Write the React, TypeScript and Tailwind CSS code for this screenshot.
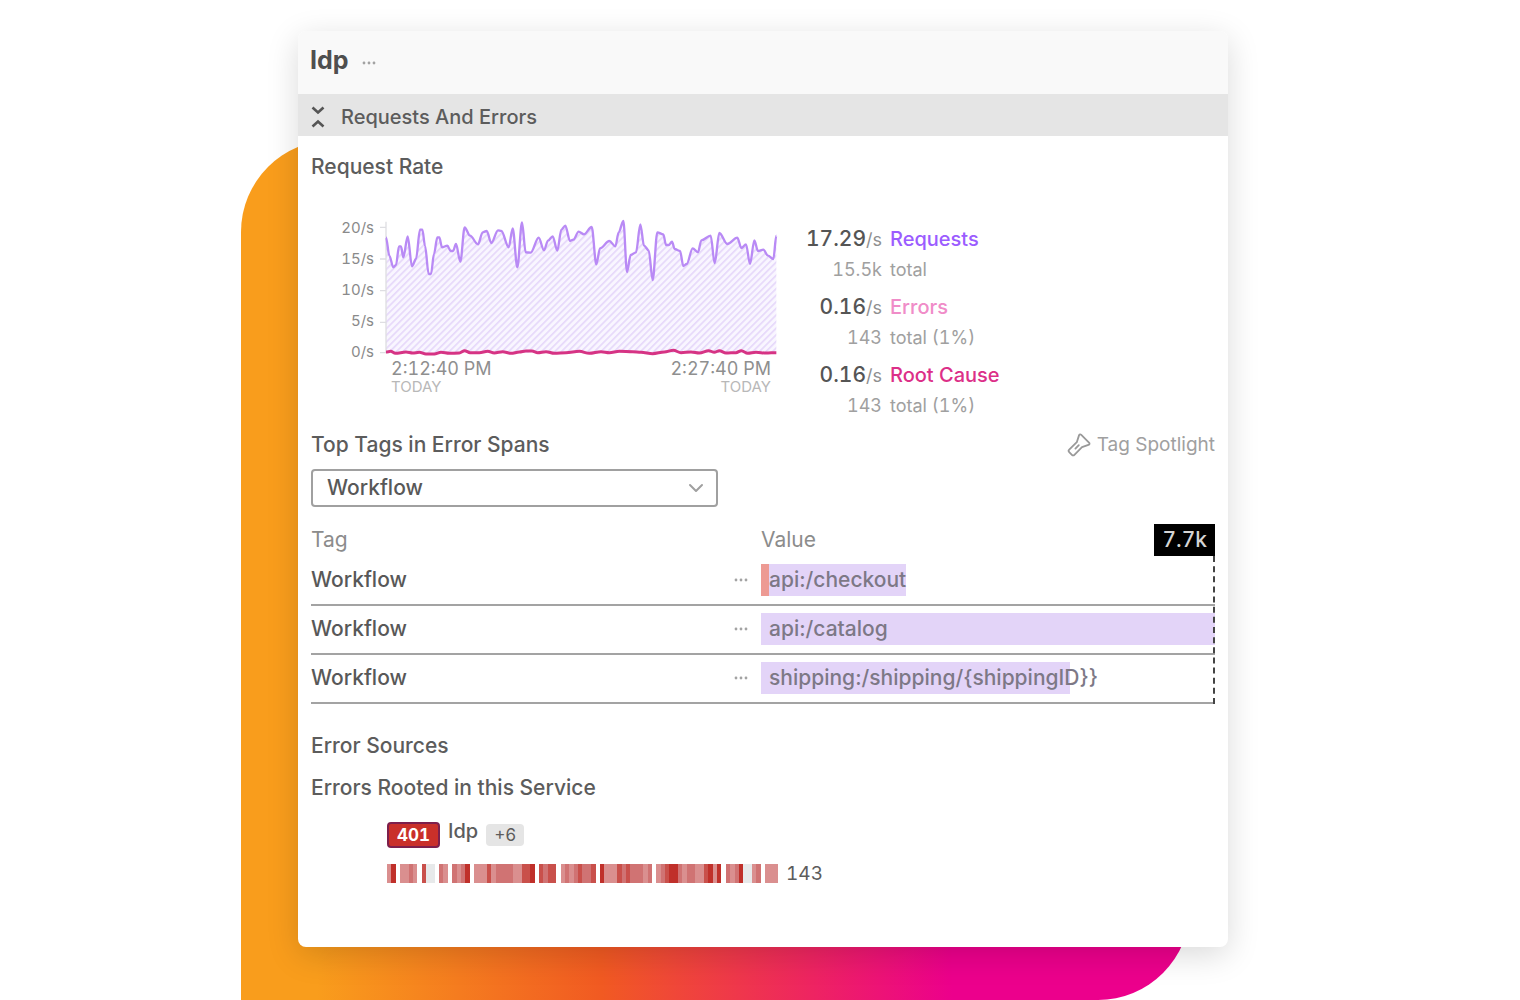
import { ChevronDown } from 'lucide-react';
import { useState } from 'react';

const stats = [
  { rate: '17.29', label: 'Requests', count: '15.5k', note: 'total', color: 'text-[#9b5cff]' },
  { rate: '0.16', label: 'Errors', count: '143', note: 'total (1%)', color: 'text-[#f08cc8]' },
  { rate: '0.16', label: 'Root Cause', count: '143', note: 'total (1%)', color: 'text-[#dc2f88]' },
];

const tagRows = [
  { value: 'api:/checkout', width: 32, error: true },
  { value: 'api:/catalog', width: 100, error: false },
  { value: 'shipping:/shipping/{shippingID}}', width: 68, error: false },
];

const axisLabels = ['20/s', '15/s', '10/s', '5/s', '0/s'];

// x, y in plot units: three per pixel, zero requests at y = 431
const requestPoints: [number, number][] = [
  [0, 85], [10, 140], [22, 175], [30, 168], [39, 112], [45, 112], [52, 145], [65, 82], [78, 172], [90, 150],
  [102, 62], [109, 62], [117, 110], [128, 195], [135, 195], [144, 135], [154, 85], [160, 85], [168, 115], [184, 110],
  [194, 126], [201, 126], [210, 105], [223, 158], [236, 55], [252, 80], [276, 106], [290, 70], [302, 66], [316, 102],
  [336, 64], [346, 66], [368, 115], [380, 58], [394, 175], [408, 40], [419, 130], [434, 131], [458, 86], [474, 124],
  [486, 95], [500, 82], [514, 125], [526, 62], [538, 50], [552, 96], [562, 92], [578, 68], [594, 76], [617, 54],
  [631, 166], [642, 118], [670, 96], [688, 112], [698, 70], [712, 36], [723, 189], [734, 138], [750, 130], [763, 46],
  [774, 110], [788, 124], [800, 213], [814, 70], [832, 76], [840, 108], [848, 108], [858, 98], [866, 120], [882, 126],
  [892, 171], [902, 165], [920, 118], [936, 130], [946, 94], [974, 80], [986, 163], [1000, 72], [1024, 105], [1054, 86],
  [1066, 117], [1080, 106], [1092, 165], [1105, 94], [1116, 126], [1132, 122], [1146, 140], [1162, 150], [1171, 80],
];

const errorPoints: [number, number][] = [
  [0, 429], [14, 427], [28, 433], [60, 429], [80, 432], [100, 430], [120, 435], [145, 435], [165, 430], [190, 433],
  [220, 432], [236, 425], [252, 431], [280, 431], [305, 427], [325, 432], [350, 428], [375, 433], [400, 429], [420, 426],
  [438, 426], [455, 431], [480, 428], [505, 433], [540, 431], [580, 427], [610, 433], [645, 428], [670, 431], [700, 427],
  [740, 428], [765, 430], [800, 434], [835, 429], [862, 424], [885, 431], [915, 429], [940, 432], [968, 425], [985, 430],
  [1000, 425], [1020, 432], [1050, 431], [1066, 425], [1085, 433], [1110, 430], [1140, 432], [1171, 431],
];

// one cell per ten seconds: "." is a gap, "g" is idle, 1-4 grow with the error count
const heatCells =
  '14.1121.3gg.21.2124.111312222113' + '34.3233.12123223.4111323222' + '12.123442122113414.2124gg12.111';

const heatColors: Record<string, string> = {
  '.': 'bg-white',
  g: 'bg-[#e7e9ea]',
  '1': 'bg-[#da8f8f]',
  '2': 'bg-[#d07373]',
  '3': 'bg-[#c9504b]',
  '4': 'bg-[#c0302a]',
};

function smoothPath(points: [number, number][]) {
  return points.reduce((path, [x, y], index) => {
    if (index === 0) return `M${x} ${y}`;
    const [prevX, prevY] = points[index - 1];
    const third = (x - prevX) / 3;
    return `${path}C${prevX + third} ${prevY} ${x - third} ${y} ${x} ${y}`;
  }, '');
}

function Dots() {
  return (
    <svg width="16" height="4" viewBox="0 0 16 4" fill="#a3a3a3" aria-hidden="true">
      <circle cx="3" cy="2" r="1.4" />
      <circle cx="8" cy="2" r="1.4" />
      <circle cx="13" cy="2" r="1.4" />
    </svg>
  );
}

function FlashlightIcon() {
  return (
    <svg width="24" height="24" viewBox="0 0 24 24" fill="none" stroke="#999" strokeWidth="1.8" strokeLinecap="round" strokeLinejoin="round" aria-hidden="true">
      <path d="M12 2.4 C12.4 1.2 13.4 1 14.3 1.9 L22 9.6 C22.9 10.5 22.6 11.5 21.4 11.9 L15 14.2 L7.4 21.8 C6.6 22.6 5.7 22.6 4.9 21.8 L2.2 19.1 C1.4 18.3 1.4 17.4 2.2 16.6 L9.8 9.2 Z" />
      <path d="M11.8 12.2 L8.4 15.6" />
    </svg>
  );
}

function RequestChart() {
  const line = smoothPath(requestPoints);

  return (
    <div className="w-[442px]">
      <div className="flex gap-0.5">
        <div className="flex w-[37px] flex-col text-right text-[15px] leading-[31px] text-[#8a8a8a] tabular-nums">
          {axisLabels.map((label) => (
            <span key={label}>{label}</span>
          ))}
        </div>
        <svg width="403" height="145" viewBox="-30 9 1209 435" role="img" aria-label="Request rate">
          <defs>
            <pattern id="hatch" width="14" height="14" patternUnits="userSpaceOnUse" patternTransform="rotate(45)">
              <rect width="14" height="14" fill="#f9f6ff" />
              <rect width="5" height="14" fill="#e6d8fa" />
            </pattern>
          </defs>
          <path d={`${line}V431H0Z`} fill="url(#hatch)" />
          <path d="M0 38V431M-18 55H0M-18 150H0M-18 245H0M-18 340H0M-18 431H0" stroke="#dedee2" strokeWidth="4" />
          <path d={line} fill="none" stroke="#b98af5" strokeWidth="7" strokeLinejoin="round" />
          <path d={smoothPath(errorPoints)} fill="none" stroke="#d63384" strokeWidth="9" />
        </svg>
      </div>
      <div className="-mt-2 flex justify-between pr-2 pl-[54px] text-[#8f8f8f]">
        <div>
          <p className="text-[18px] leading-5 tabular-nums">2:12:40 PM</p>
          <p className="text-[15px] leading-4 text-[#b8b8b8]">TODAY</p>
        </div>
        <div className="text-right">
          <p className="text-[18px] leading-5 tabular-nums">2:27:40 PM</p>
          <p className="text-[15px] leading-4 text-[#b8b8b8]">TODAY</p>
        </div>
      </div>
    </div>
  );
}

function RateStats() {
  return (
    <dl className="flex flex-col gap-[7px] tabular-nums">
      {stats.map((stat) => (
        <div key={stat.label} className="grid grid-cols-[84px_auto] gap-x-2 leading-[30px]">
          <dd className="text-right text-[21px] font-medium text-[#555]">
            {stat.rate}
            <span className="text-[18px] font-normal text-[#8f8f8f]">/s</span>
          </dd>
          <dt className={`text-[20px] font-medium ${stat.color}`}>{stat.label}</dt>
          <dd className="text-right text-[18px] text-[#a0a0a0]">{stat.count}</dd>
          <dd className="text-[18px] text-[#a0a0a0]">{stat.note}</dd>
        </div>
      ))}
    </dl>
  );
}

function TagTable() {
  return (
    <div className="relative mt-[17px]">
      <table className="w-full table-fixed text-left text-[21px] text-[#585858]">
        <thead>
          <tr className="h-[30px] text-[#8c8c8c]">
            <th className="p-0 font-normal">Tag</th>
            <th className="w-[40px] p-0" aria-label="Actions" />
            <th className="w-[454px] p-0 font-normal">Value</th>
          </tr>
        </thead>
        <tbody>
          {tagRows.map((row) => (
            <tr key={row.value} className="h-[49px] border-b-2 border-[#a3a3a3]">
              <td className="p-0 font-medium">Workflow</td>
              <td className="p-0">
                <button type="button" aria-label="Row actions" className="flex h-4 items-center pl-[12px]">
                  <Dots />
                </button>
              </td>
              <td className="p-0">
                <div className="grid h-8 items-center">
                  <div className="col-start-1 row-start-1 flex h-8 bg-[#e3d4f8]" style={{ width: `${row.width}%` }}>
                    {row.error && <div className="w-2 bg-[#ed9a93]" />}
                  </div>
                  <span className="col-start-1 row-start-1 pl-2 font-medium text-[#7d7886]">{row.value}</span>
                </div>
              </td>
            </tr>
          ))}
        </tbody>
      </table>
      <span className="absolute top-0 right-0 bg-black px-2 text-[21px] leading-8 font-medium text-[#d4d4d4] tabular-nums">7.7k</span>
      <div className="absolute top-8 right-0 bottom-0 border-r-2 border-dashed border-[#444]" />
    </div>
  );
}

export default function App() {
  const [tag, setTag] = useState('Workflow');

  return (
    <main className="grid min-h-screen grid-cols-[241fr_987fr_292fr] bg-white font-['Inter','Liberation_Sans',sans-serif]">
      <div className="relative col-start-2 pt-[31px] pb-[53px] pl-[57px]">
        <div className="absolute top-[140px] right-[38px] bottom-0 left-0 rounded-tl-[92px] rounded-br-[92px] bg-[linear-gradient(90deg,#f99d1c_0%,#f99d1c_8%,#f15a22_38%,#ec008c_75%,#ec008c_100%)]" />

        <article className="relative h-full overflow-clip rounded-lg bg-white pb-[60px] text-[#5c5c5c] shadow-[0_8px_32px_rgba(0,0,0,0.15)]">
          <header className="flex h-[63px] items-center gap-3 bg-[#f9f9f9] px-3 pb-1">
            <h1 className="text-[25px] font-bold text-[#4f4f4f]">Idp</h1>
            <button type="button" aria-label="Service actions" className="pt-1">
              <Dots />
            </button>
          </header>

          <button type="button" className="flex h-[42px] w-full items-center gap-[15px] bg-[#e5e5e5] px-3 pt-1 text-[20px] font-medium">
            <svg width="16" height="22" viewBox="0 0 16 22" fill="none" stroke="#555" strokeWidth="2.6" aria-hidden="true">
              <path d="M2.5 1.5L8 6.5L13.5 1.5M2.5 20.5L8 15.5L13.5 20.5" />
            </svg>
            Requests And Errors
          </button>

          <div className="px-[13px] pt-4">
            <h2 className="text-[21px] leading-[30px] font-medium">Request Rate</h2>

            <div className="flex gap-[19px] pt-[30px] pl-[26px]">
              <RequestChart />
              <div className="pt-[12px]">
                <RateStats />
              </div>
            </div>

            <div className="mt-[9px] flex items-center justify-between">
              <h2 className="text-[21px] leading-[30px] font-medium">
                <label htmlFor="tag-select">Top Tags in Error Spans</label>
              </h2>
              <a href="#tag-spotlight" className="flex items-center gap-1.5 text-[19px] text-[#a0a0a0]">
                <FlashlightIcon />
                Tag Spotlight
              </a>
            </div>

            <div className="relative mt-[9px] w-[407px]">
              <select
                id="tag-select"
                value={tag}
                onChange={(event) => setTag(event.target.value)}
                className="h-[38px] w-full appearance-none rounded border-2 border-[#a0a0a0] bg-white px-3.5 text-[21px] font-medium text-[#585858] outline-none"
              >
                <option>Workflow</option>
              </select>
              <ChevronDown size={24} strokeWidth={2} className="pointer-events-none absolute top-[7px] right-[10px] text-[#a0a0a0]" />
            </div>

            <TagTable />

            <h2 className="mt-[27px] text-[21px] leading-[30px] font-medium">Error Sources</h2>
            <h3 className="mt-[12px] text-[21px] leading-[30px] font-medium">Errors Rooted in this Service</h3>

            <div className="mt-[15px] pl-[76px]">
              <div className="flex items-center gap-2">
                <span className="rounded border-2 border-[#7d1f4c] bg-[#c9302a] px-2 text-[17px] leading-[22px] font-bold text-white tabular-nums">401</span>
                <span className="pb-2 text-[20px] leading-[26px] font-medium">Idp</span>
                <span className="rounded bg-[#e5e5e5] px-2 text-[17px] leading-[22px]">+6</span>
              </div>
              <div className="mt-[10px] flex items-center gap-2">
                <div className="flex h-[19px] w-[391px]">
                  {heatCells.split('').map((level, index) => (
                    <span key={index} className={`flex-1 ${heatColors[level]}`} />
                  ))}
                </div>
                <span className="text-[19px] leading-6 tabular-nums">143</span>
              </div>
            </div>
          </div>
        </article>
      </div>
    </main>
  );
}
